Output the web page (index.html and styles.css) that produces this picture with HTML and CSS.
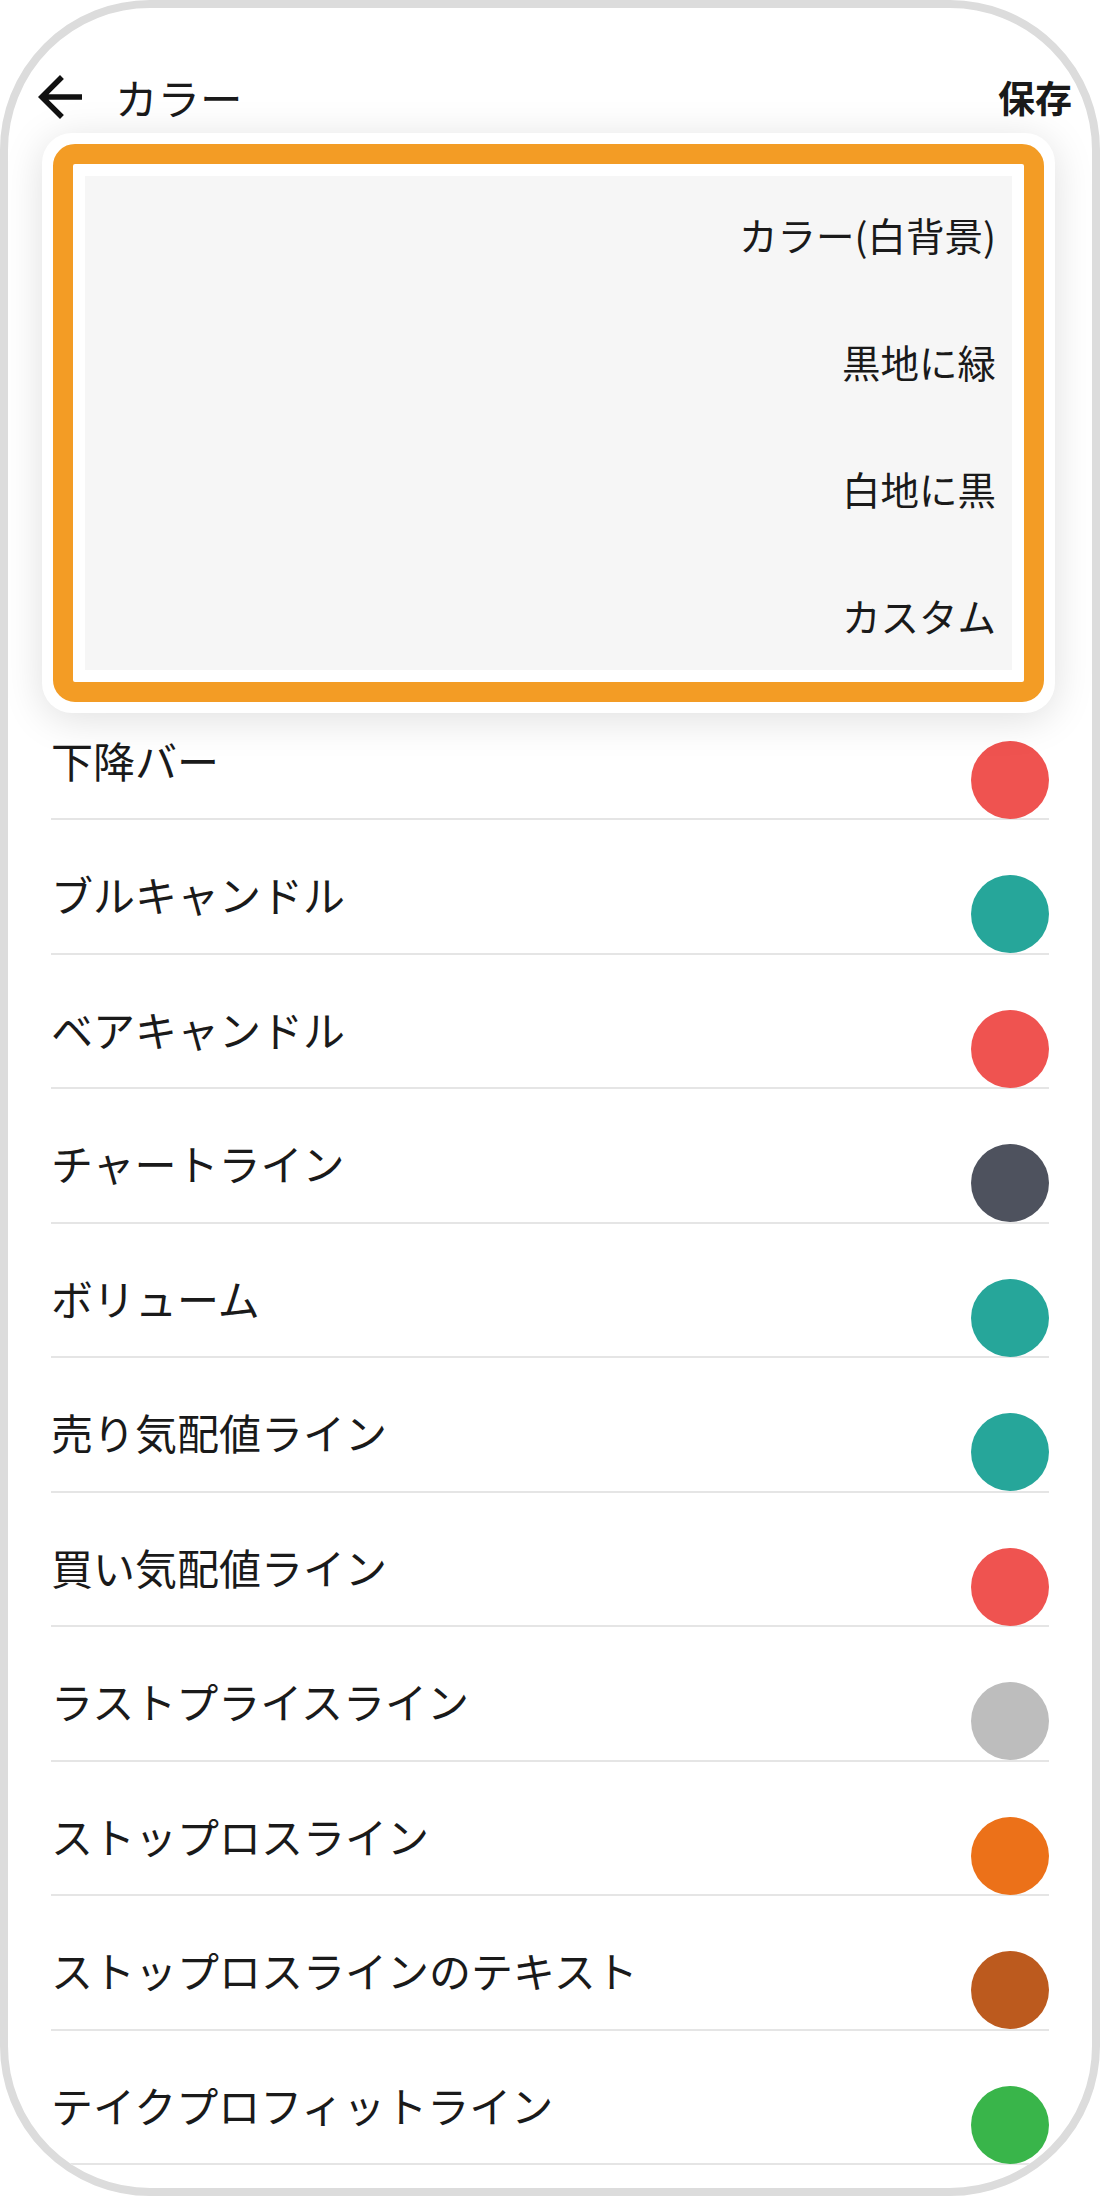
FILE: index.html
```html
<!DOCTYPE html>
<html lang="ja">
<head>
    <meta charset="UTF-8">
    <meta name="viewport" content="width=device-width, initial-scale=1.0">
    <title>カラー</title>
    <link rel="stylesheet" href="styles.css">
</head>
<body>
    <div class="phone-frame">
        <div class="app-header">
            <button class="back-button" aria-label="戻る">
                <svg width="44" height="44" viewBox="4 4 16 16">
                    <path d="M20 11H7.83l5.59-5.59L12 4l-8 8 8 8 1.41-1.41L7.83 13H20v-2z" fill="#111"/>
                </svg>
            </button>
            <h1 class="app-title">カラー</h1>
            <button class="save-button">保存</button>
        </div>

        <div class="color-list">
            <div class="color-row"><span class="color-label">下降バー</span><span class="swatch red"></span></div>
            <div class="color-row"><span class="color-label">ブルキャンドル</span><span class="swatch teal"></span></div>
            <div class="color-row"><span class="color-label">ベアキャンドル</span><span class="swatch red"></span></div>
            <div class="color-row"><span class="color-label">チャートライン</span><span class="swatch slate"></span></div>
            <div class="color-row"><span class="color-label">ボリューム</span><span class="swatch teal"></span></div>
            <div class="color-row"><span class="color-label">売り気配値ライン</span><span class="swatch teal"></span></div>
            <div class="color-row"><span class="color-label">買い気配値ライン</span><span class="swatch red"></span></div>
            <div class="color-row"><span class="color-label">ラストプライスライン</span><span class="swatch grey"></span></div>
            <div class="color-row"><span class="color-label">ストップロスライン</span><span class="swatch orange"></span></div>
            <div class="color-row"><span class="color-label">ストップロスラインのテキスト</span><span class="swatch brown"></span></div>
            <div class="color-row"><span class="color-label">テイクプロフィットライン</span><span class="swatch green"></span></div>
        </div>

        <div class="theme-menu">
            <div class="highlight-box">
                <div class="menu-panel">
                    <div class="menu-list">
                        <div class="menu-item">カラー(白背景)</div>
                        <div class="menu-item">黒地に緑</div>
                        <div class="menu-item">白地に黒</div>
                        <div class="menu-item">カスタム</div>
                    </div>
                </div>
            </div>
        </div>
    </div>
</body>
</html>
```

FILE: styles.css
```css
* {
    box-sizing: border-box;
}

body {
    margin: 0;
    background-color: #fff;
    font-family: "Noto Sans CJK JP", "Noto Sans", sans-serif;
    color: #1a1a1a;
}

.phone-frame {
    position: relative;
    width: 1100px;
    height: 2196px;
    border: 8px solid #dcdcdc;
    border-radius: 150px;
    overflow: hidden;
    background-color: #fff;
}

.app-header {
    display: flex;
    align-items: center;
    height: 60px;
    margin-top: 59px;
    padding: 0 20px 0 30px;
}

.back-button {
    display: flex;
    padding: 0;
    border: none;
    background: none;
}

.app-title {
    flex: 1;
    margin: 0 0 0 33px;
    font-size: 42.5px;
    font-weight: 400;
    line-height: 60px;
}

.save-button {
    padding: 0;
    border: none;
    background: none;
    font-family: inherit;
    font-size: 37px;
    font-weight: 700;
    color: #1a1a1a;
}

.color-list {
    margin-top: 558.5px;
    padding: 0 43px;
}

.color-row {
    display: flex;
    justify-content: space-between;
    align-items: flex-start;
    height: 134.5px;
    border-bottom: 2px solid #e5e5e5;
}

.color-label {
    margin-top: 44px;
    font-size: 42px;
    line-height: 60px;
}

.swatch {
    width: 78px;
    height: 78px;
    margin-top: 55px;
    border-radius: 50%;
}

.swatch.red { background-color: #ef5350; }
.swatch.teal { background-color: #26a69a; }
.swatch.slate { background-color: #4e525e; }
.swatch.grey { background-color: #bdbdbd; }
.swatch.orange { background-color: #ec7119; }
.swatch.brown { background-color: #bc5a1e; }
.swatch.green { background-color: #39b54a; }

/* dropdown over the list */
.theme-menu {
    position: absolute;
    top: 125px;
    left: 34px;
    width: 1013px;
    height: 580px;
    padding: 11px;
    background-color: #fff;
    border-radius: 30px;
    box-shadow: 0 6px 40px rgba(0, 0, 0, 0.13);
}

.highlight-box {
    height: 100%;
    padding: 12px;
    border: 20px solid #f39c25;
    border-radius: 22px;
}

.menu-panel {
    height: 100%;
    overflow: hidden;
    background-color: #f6f6f6;
}

.menu-list {
    margin-top: -5px;
}

.menu-item {
    height: 127px;
    padding-right: 16px;
    font-size: 38.5px;
    line-height: 127px;
    text-align: right;
}
```
